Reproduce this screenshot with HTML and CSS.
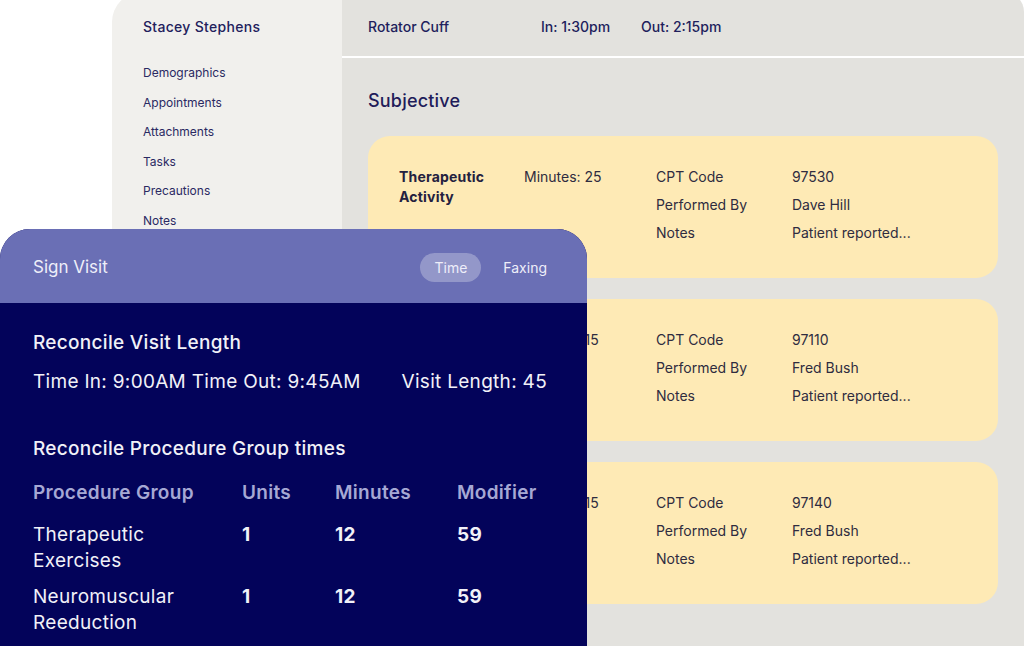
FILE: index.html
```html
<!DOCTYPE html>
<html lang="en">
<head>
    <meta charset="UTF-8">
    <meta name="viewport" content="width=device-width, initial-scale=1.0">
    <title>Sign Visit</title>
    <link rel="stylesheet" href="styles.css">
</head>
<body>
    <div class="app">
        <aside class="sidebar">
            <div class="patient">Stacey Stephens</div>
            <nav class="side-nav">
                <a>Demographics</a>
                <a>Appointments</a>
                <a>Attachments</a>
                <a>Tasks</a>
                <a>Precautions</a>
                <a>Notes</a>
            </nav>
        </aside>

        <main class="main">
            <header class="visit-bar">
                <span class="visit-title">Rotator Cuff</span>
                <span class="visit-in">In: 1:30pm</span>
                <span>Out: 2:15pm</span>
            </header>

            <section class="notes">
                <h2>Subjective</h2>

                <div class="card">
                    <div class="card-title">Therapeutic Activity</div>
                    <div class="card-minutes">Minutes: 25</div>
                    <div class="card-details">
                        <span>CPT Code</span><span>97530</span>
                        <span>Performed By</span><span>Dave Hill</span>
                        <span>Notes</span><span>Patient reported...</span>
                    </div>
                </div>

                <div class="card">
                    <div class="card-title">Therapeutic Exercise</div>
                    <div class="card-minutes">Minutes: 15</div>
                    <div class="card-details">
                        <span>CPT Code</span><span>97110</span>
                        <span>Performed By</span><span>Fred Bush</span>
                        <span>Notes</span><span>Patient reported...</span>
                    </div>
                </div>

                <div class="card">
                    <div class="card-title">Manual Therapy</div>
                    <div class="card-minutes">Minutes: 15</div>
                    <div class="card-details">
                        <span>CPT Code</span><span>97140</span>
                        <span>Performed By</span><span>Fred Bush</span>
                        <span>Notes</span><span>Patient reported...</span>
                    </div>
                </div>
            </section>
        </main>
    </div>

    <div class="modal">
        <div class="modal-head">
            <span class="modal-title">Sign Visit</span>
            <div class="tabs">
                <span class="tab active">Time</span>
                <span class="tab">Faxing</span>
            </div>
        </div>

        <div class="modal-body">
            <h3>Reconcile Visit Length</h3>
            <div class="visit-length">
                <span>Time In: 9:00AM Time Out: 9:45AM</span>
                <span>Visit Length: 45</span>
            </div>

            <h3 class="group-heading">Reconcile Procedure Group times</h3>
            <div class="group-table">
                <span class="th">Procedure Group</span>
                <span class="th">Units</span>
                <span class="th">Minutes</span>
                <span class="th">Modifier</span>

                <span class="td-label">Therapeutic Exercises</span>
                <span class="td">1</span>
                <span class="td">12</span>
                <span class="td">59</span>

                <span class="td-label">Neuromuscular Reeduction</span>
                <span class="td">1</span>
                <span class="td">12</span>
                <span class="td">59</span>
            </div>
        </div>
    </div>
</body>
</html>
```

FILE: styles.css
```css
body {
    margin: 0;
    width: 1024px;
    height: 646px;
    overflow: hidden;
    position: relative;
    background-color: #ffffff;
    font-family: "Inter", "Liberation Sans", sans-serif;
}
.app {
    display: flex;
    margin: -8px 0 0 112px;
    height: 720px;
    border-radius: 30px 20px 0 0;
    overflow: hidden;
}
.sidebar {
    width: 230px;
    flex-shrink: 0;
    padding: 25px 0 0 31px;
    box-sizing: border-box;
    background-color: #f1f0ed;
    color: #22205c;
}
.patient {
    font-size: 14px;
    font-weight: 500;
    line-height: 20px;
    letter-spacing: 0.3px;
}
.side-nav {
    margin-top: 21px;
}
.side-nav a {
    display: block;
    font-size: 12px;
    line-height: 29.6px;
    color: #2a2962;
}
.main {
    flex: 1;
    background-color: #e3e2de;
    color: #211e5c;
}
.visit-bar {
    display: flex;
    height: 66px;
    padding: 25px 0 0 26px;
    box-sizing: border-box;
    border-bottom: 2px solid #ffffff;
    font-size: 14px;
    font-weight: 500;
    line-height: 20px;
}
.visit-title {
    width: 173px;
}
.visit-in {
    width: 100px;
}
.notes {
    padding: 0 26px;
}
.notes h2 {
    margin: 31px 0 23px;
    font-size: 18px;
    font-weight: 500;
    line-height: 24px;
    letter-spacing: 0.2px;
    color: #1f1c5a;
}
.card {
    display: flex;
    height: 142px;
    margin-bottom: 21px;
    padding: 31px 0 0 31px;
    box-sizing: border-box;
    border-radius: 22px;
    background-color: #feeab5;
    color: #2f2c40;
    font-size: 14px;
    line-height: 20px;
}
.card-title {
    width: 125px;
    padding-right: 25px;
    box-sizing: border-box;
    font-weight: 700;
    letter-spacing: 0.2px;
    color: #24213f;
}
.card-minutes {
    width: 132px;
}
.card-details {
    display: grid;
    grid-template-columns: 136px auto;
    row-gap: 8px;
    align-content: start;
}
.modal {
    position: absolute;
    left: 0;
    top: 229px;
    width: 587px;
    height: 440px;
    border-radius: 30px 30px 0 0;
    overflow: hidden;
    background-color: #03035a;
    color: #f1f1f8;
}
.modal-head {
    display: flex;
    align-items: center;
    justify-content: space-between;
    height: 74px;
    padding: 2px 26px 0 33px;
    box-sizing: border-box;
    background-color: #6a6fb5;
}
.modal-title {
    font-size: 17px;
    color: #eeeef9;
}
.tabs {
    display: flex;
    gap: 8px;
}
.tab {
    height: 29px;
    padding: 0 14px;
    border-radius: 15px;
    font-size: 14px;
    line-height: 29px;
    color: #eeeef9;
}
.tab.active {
    background-color: rgba(255, 255, 255, 0.28);
}
.modal-body {
    padding: 28px 40px 0 33px;
    font-size: 19px;
    line-height: 24px;
    letter-spacing: 0.3px;
}
.modal-body h3 {
    margin: 0;
    font-size: 19px;
    font-weight: 500;
    line-height: 24px;
}
.visit-length {
    display: flex;
    justify-content: space-between;
    margin-top: 15px;
}
.modal-body .group-heading {
    margin-top: 43px;
}
.group-table {
    display: grid;
    grid-template-columns: 209px 93px 122px auto;
    margin-top: 20px;
}
.th {
    font-weight: 600;
    color: #a6a8d4;
    padding-bottom: 17px;
}
.td-label {
    padding-right: 40px;
    padding-bottom: 10px;
    line-height: 26px;
}
.td {
    font-weight: 700;
    line-height: 26px;
}
```
